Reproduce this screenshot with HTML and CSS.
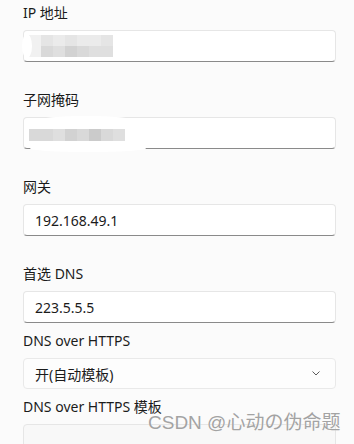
FILE: index.html
```html
<!DOCTYPE html>
<html lang="zh-CN">
<head>
  <meta charset="UTF-8">
  <meta name="viewport" content="width=device-width, initial-scale=1.0">
  <title>IP 设置</title>
  <link rel="stylesheet" href="styles.css">
</head>
<body>
  <div class="ip-form">
    <div class="field spaced">
      <label class="field-label">IP 地址</label>
      <div class="textbox masked">
        <div class="mosaic">
          <span class="m1"></span><span class="m3"></span><span class="m2"></span><span class="m3"></span><span class="m2"></span><span class="m2"></span><span class="m3"></span>
          <span class="m1"></span><span class="m5"></span><span class="m4"></span><span class="m6"></span><span class="m5"></span><span class="m4"></span><span class="m4"></span>
        </div>
        <span class="smudge smudge-ip"></span>
      </div>
    </div>

    <div class="field spaced">
      <label class="field-label">子网掩码</label>
      <div class="textbox masked">
        <div class="mosaic mosaic-row">
          <span class="m5"></span><span class="m5"></span><span class="m4"></span><span class="m6"></span><span class="m5"></span><span class="m7"></span><span class="m5"></span><span class="m4"></span>
        </div>
        <span class="smudge smudge-top"></span>
        <span class="smudge smudge-bottom"></span>
      </div>
    </div>

    <div class="field spaced">
      <label class="field-label">网关</label>
      <div class="textbox">192.168.49.1</div>
    </div>

    <div class="field">
      <label class="field-label">首选 DNS</label>
      <div class="textbox">223.5.5.5</div>
    </div>

    <div class="field">
      <label class="field-label">DNS over HTTPS</label>
      <div class="combo">
        <span>开(自动模板)</span>
        <svg class="chevron" width="8" height="5" viewBox="0 0 8 5">
          <polyline points="0.5,0.5 4,4 7.5,0.5" fill="none" stroke="#5c5c5c" stroke-width="1"/>
        </svg>
      </div>
    </div>

    <div class="field">
      <label class="field-label">DNS over HTTPS 模板</label>
      <div class="textbox empty"></div>
    </div>
  </div>

  <div class="watermark">CSDN @心动の伪命题</div>
</body>
</html>
```

FILE: styles.css
```css
* {
  margin: 0;
  padding: 0;
  box-sizing: border-box;
}

body {
  font-family: "Noto Sans", "Noto Sans CJK SC", sans-serif;
  font-size: 14px;
  color: #1b1b1b;
  background-color: #fbfbfb;
  position: relative;
  height: 444px;
  overflow: hidden;
}

.ip-form {
  padding: 3px 18px 0 23px;
}

.field {
  display: flex;
  flex-direction: column;
  margin-bottom: 8px;
}

.field.spaced {
  margin-bottom: 28px;
}

.field-label {
  line-height: 20px;
  margin-bottom: 7px;
}

.textbox {
  position: relative;
  height: 32px;
  padding: 0 11px;
  display: flex;
  align-items: center;
  background-color: #ffffff;
  border: 1px solid #e6e6e6;
  border-bottom-color: #8a8a8a;
  border-radius: 4px;
}

.textbox.empty {
  background-color: #f8f8f8;
  border-bottom-color: #e6e6e6;
}

.textbox.masked {
  padding-left: 5px;
}

.mosaic {
  display: grid;
  grid-template-columns: repeat(7, 12px);
  grid-auto-rows: 11px;
}

.mosaic-row {
  grid-template-columns: repeat(8, 12px);
  grid-auto-rows: 12px;
  margin-top: 3px;
}

.m1 { background-color: #f1f1f1; }
.m2 { background-color: #ebebeb; }
.m3 { background-color: #e5e5e5; }
.m4 { background-color: #dfdfdf; }
.m5 { background-color: #d9d9d9; }
.m6 { background-color: #d2d2d2; }
.m7 { background-color: #cbcbcb; }

/* white brush strokes left by the blur tool */
.smudge {
  position: absolute;
  background-color: #ffffff;
  border-radius: 50%;
}

.smudge-ip {
  left: -2px;
  top: 3px;
  width: 10px;
  height: 24px;
}

.smudge-top {
  left: 14px;
  top: -2px;
  width: 96px;
  height: 9px;
}

.smudge-bottom {
  left: 6px;
  bottom: -4px;
  width: 116px;
  height: 7px;
}

.combo {
  height: 31px;
  padding: 0 15px 0 11px;
  display: flex;
  align-items: center;
  justify-content: space-between;
  background-color: #fdfdfd;
  border: 1px solid #e9e9e9;
  border-radius: 4px;
}

.chevron {
  display: block;
}

.watermark {
  position: absolute;
  left: 148px;
  top: 411px;
  font-family: "Liberation Sans", "Noto Sans CJK SC", sans-serif;
  font-size: 19px;
  line-height: 24px;
  color: #a3a3a3;
  text-shadow: 0 0 1px #ffffff;
  white-space: nowrap;
}
```
